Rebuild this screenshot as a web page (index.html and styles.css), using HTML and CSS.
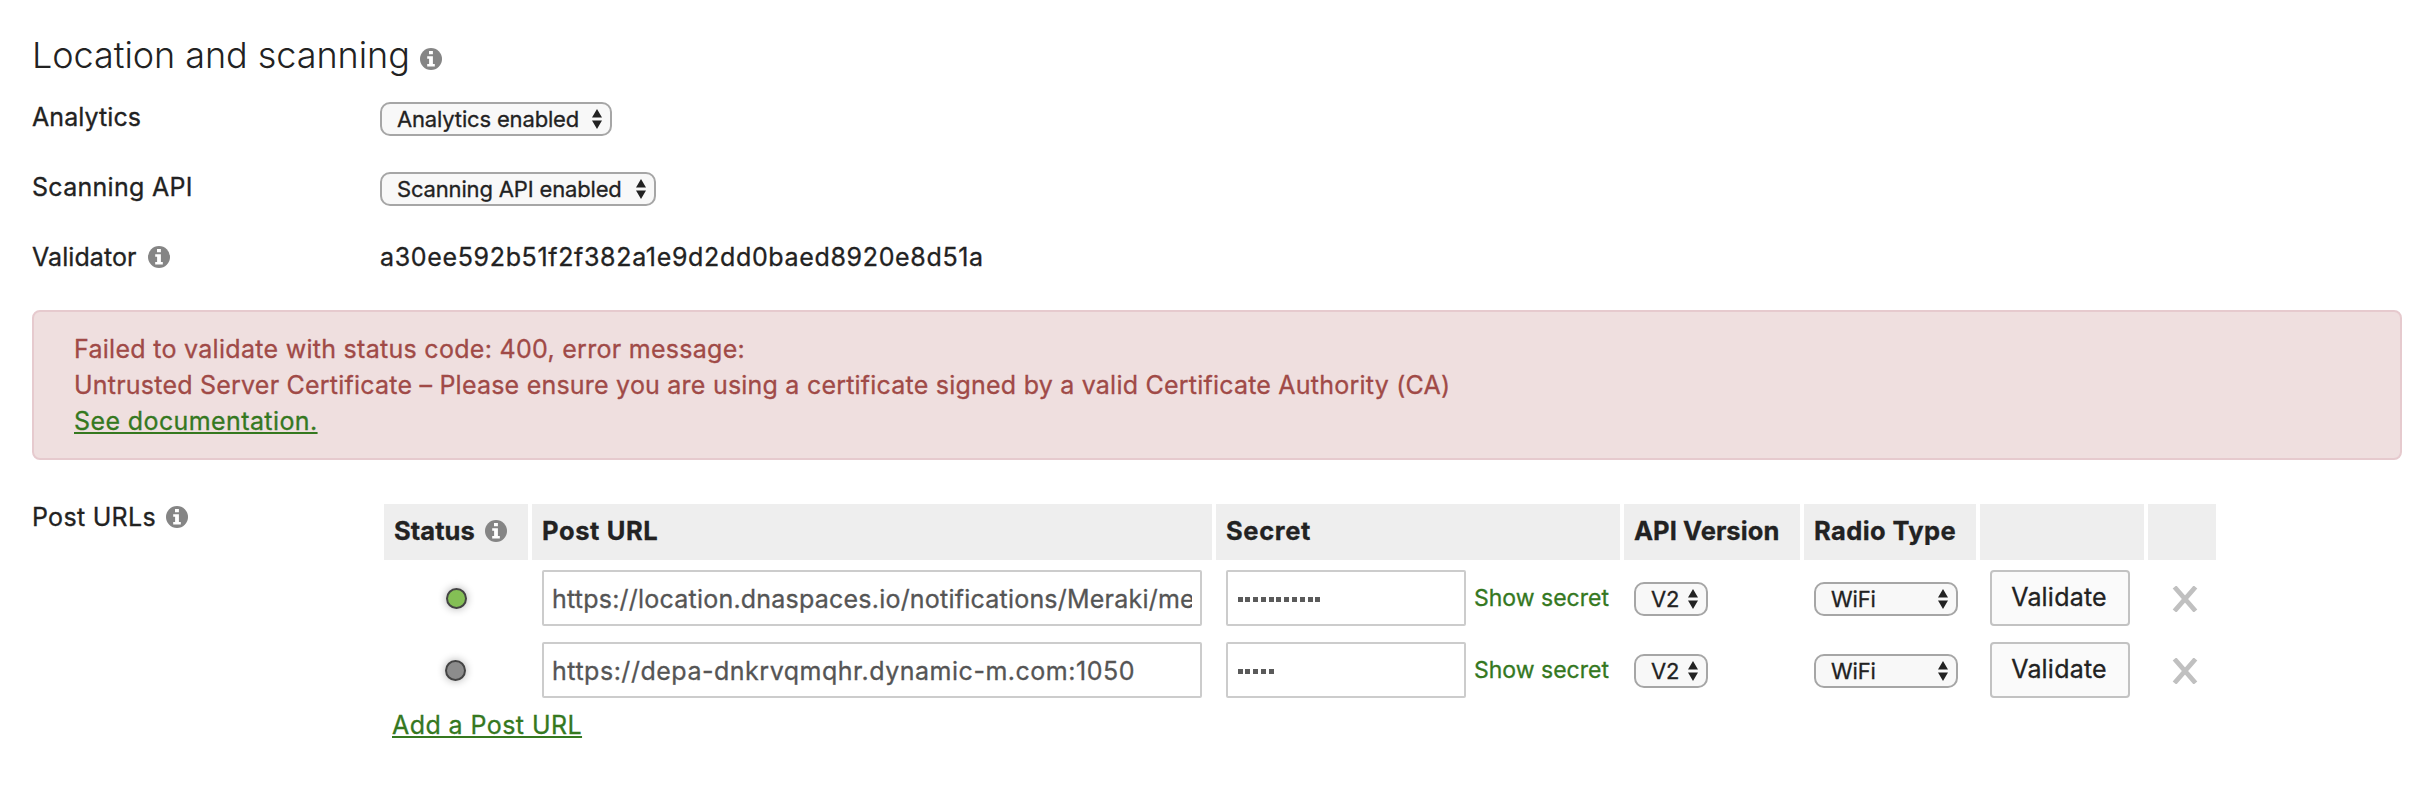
FILE: index.html
```html
<!DOCTYPE html>
<html lang="en">
<head>
<meta charset="utf-8">
<title>Location and scanning</title>
<link rel="stylesheet" href="styles.css">
</head>
<body>
<svg class="defs" width="0" height="0">
  <symbol id="info" viewBox="0 0 22 22"><circle cx="11" cy="11" r="11" fill="#858585"/><path fill="#fff" d="M9 2.9h3.9v3.3H9zM7.2 8.3h5.7v7.6h1.9v2.5H7.2v-2.5h1.9v-5.1H7.2z"/></symbol>
  <symbol id="arrows" viewBox="0 0 10 20"><path fill="#222" d="M5 0l5 8.4H0zM5 20l5-8.4H0z"/></symbol>
  <symbol id="remove" viewBox="0 0 26 26"><path fill="none" stroke="#c0c0c0" stroke-width="4.8" d="M2.5 1l21 24M23.5 1l-21 24"/></symbol>
</svg>
<main class="page">
  <h1 class="title">Location and scanning<svg class="info"><use href="#info"/></svg></h1>
  <div class="row">
    <div class="label ls-1">Analytics</div>
    <div class="select select-analytics">Analytics enabled<svg class="arrows"><use href="#arrows"/></svg></div>
  </div>
  <div class="row">
    <div class="label ls-3">Scanning API</div>
    <div class="select select-scanning">Scanning API enabled<svg class="arrows"><use href="#arrows"/></svg></div>
  </div>
  <div class="row">
    <div class="label ls-1">Validator<svg class="info"><use href="#info"/></svg></div>
    <div class="hash">a30ee592b51f2f382a1e9d2dd0baed8920e8d51a</div>
  </div>
  <div class="alert">
    <p class="ls-3">Failed to validate with status code: 400, error message:</p>
    <p class="ls-2">Untrusted Server Certificate – Please ensure you are using a certificate signed by a valid Certificate Authority (CA)</p>
    <p class="ls-4"><a class="link" href="#">See documentation.</a></p>
  </div>
  <section class="post">
    <div class="post-label ls-3">Post URLs<svg class="info"><use href="#info"/></svg></div>
    <div class="content">
      <div class="grid head">
        <div class="ls-1">Status<svg class="info"><use href="#info"/></svg></div>
        <div class="ls-6">Post URL</div>
        <div class="ls-6">Secret</div>
        <div class="ls-1">API Version</div>
        <div class="ls-4">Radio Type</div>
        <div></div>
        <div></div>
      </div>
      <div class="grid item">
        <div class="status"><i class="dot green"></i></div>
        <div><div class="field url ls-2">https://location.dnaspaces.io/notifications/Meraki/me</div></div>
        <div class="secret"><div class="field masked"><i></i><i></i><i></i><i></i><i></i><i></i><i></i><i></i><i></i><i></i><i></i></div><a class="show" href="#">Show secret</a></div>
        <div><div class="select version">V2<svg class="arrows"><use href="#arrows"/></svg></div></div>
        <div><div class="select radio">WiFi<svg class="arrows"><use href="#arrows"/></svg></div></div>
        <div><div class="button">Validate</div></div>
        <div class="last"><svg class="remove"><use href="#remove"/></svg></div>
      </div>
      <div class="grid item">
        <div class="status"><i class="dot gray"></i></div>
        <div><div class="field url ls-5">https://depa-dnkrvqmqhr.dynamic-m.com:1050</div></div>
        <div class="secret"><div class="field masked"><i></i><i></i><i></i><i></i><i></i></div><a class="show" href="#">Show secret</a></div>
        <div><div class="select version">V2<svg class="arrows"><use href="#arrows"/></svg></div></div>
        <div><div class="select radio">WiFi<svg class="arrows"><use href="#arrows"/></svg></div></div>
        <div><div class="button">Validate</div></div>
        <div class="last"><svg class="remove"><use href="#remove"/></svg></div>
      </div>
      <div class="add"><a class="link" href="#">Add a Post URL</a></div>
    </div>
  </section>
</main>
</body>
</html>
```
FILE: styles.css
```css
* { box-sizing: border-box; }
body {
  margin: 0;
  background: #fff;
  color: #222;
  font: 25px/36px Inter, "Liberation Sans", sans-serif;
  -webkit-text-stroke: .3px;
  white-space: nowrap;
}
p { margin: 0; }
svg { display: block; flex: none; }
.defs { position: absolute; }
.page { padding: 0 22px 0 32px; }

.ls-1 { letter-spacing: .08px; }
.ls-2 { letter-spacing: .22px; }
.ls-3 { letter-spacing: .29px; }
.ls-4 { letter-spacing: .4px; }
.ls-5 { letter-spacing: .52px; }
.ls-6 { letter-spacing: .62px; }

.info { width: 22px; height: 22px; margin-left: 11px; }
.post .info { margin-left: 10px; }
.arrows { width: 10px; height: 20px; margin-left: auto; }

.title {
  display: flex;
  align-items: center;
  height: 84px;
  margin: 0;
  padding-top: 26px;
  font-size: 36px;
  font-weight: 300;
  letter-spacing: -.05px;
  -webkit-text-stroke: 0;
}
.title .info { margin: 7px 0 0 10px; }

.row { display: flex; align-items: center; height: 70px; }
.label { display: flex; align-items: center; width: 348px; padding-bottom: 4px; }
.hash { padding-bottom: 4px; letter-spacing: .66px; }

.select {
  display: flex;
  align-items: center;
  height: 34px;
  padding: 0 8px 0 15px;
  border: 2px solid #a6a6a6;
  border-radius: 10px;
  background: #f8f8f8;
  font-size: 22px;
  line-height: 28px;
  letter-spacing: -.16px;
}
.select-analytics { width: 232px; }
.select-scanning { width: 276px; }

.alert {
  height: 150px;
  margin-top: 16px;
  padding: 19px 40px;
  border: 2px solid #e6cace;
  border-radius: 8px;
  background: #efdfdf;
  color: #a04a47;
}
.link {
  color: #35781f;
  text-decoration: underline;
  text-decoration-thickness: 2px;
  text-underline-offset: 2px;
  text-decoration-skip-ink: none;
}

.post { display: flex; margin-top: 39px; }
.post-label { display: flex; align-items: center; width: 352px; height: 36px; }
.content { padding-top: 5px; }
.grid {
  display: grid;
  grid-template-columns: 144px 680px 404px 176px 172px 164px 68px;
  column-gap: 4px;
}
.head { height: 56px; margin-bottom: 2px; font-size: 25.5px; font-weight: 700; }
.head > div {
  display: flex;
  align-items: center;
  padding: 0 0 2px 10px;
  background: #eee;
}
.item { height: 72px; }
.item > div { display: flex; align-items: center; padding-left: 10px; }
.item > .status { justify-content: center; padding-left: 0; }

.dot {
  width: 21px;
  height: 21px;
  border: 2px solid #444;
  border-radius: 50%;
  box-shadow: 0 0 8px rgba(0, 0, 0, .32);
}
.green { background: #84bf55; }
.gray { margin-right: 2px; background: #8c8c8c; }

.field {
  height: 56px;
  padding: 0 8px;
  border: 2px solid #ccc;
  border-radius: 2px;
  background: #fff;
  color: #555;
}
.url { width: 660px; line-height: 54px; overflow: clip; overflow-clip-margin: content-box; }
.masked { display: flex; align-items: center; gap: 2.8px; width: 240px; padding-left: 9.5px; padding-top: 2px; }
.masked i { width: 5px; height: 5px; background: #5a5a5a; }
.show { margin-left: 8px; color: #35781f; font-size: 23px; letter-spacing: 0; text-decoration: none; }

.version { width: 74px; }
.radio { width: 144px; }
.item .select { margin-top: 2px; padding-bottom: 1px; }
.button {
  width: 140px;
  height: 56px;
  padding-right: 2px;
  border: 2px solid #c2c2c2;
  border-radius: 4px;
  background: #fafafa;
  line-height: 50px;
  text-align: center;
  letter-spacing: .2px;
}
.item > .last { padding: 2px 0 0 24px; }
.remove { width: 26px; height: 26px; }
.add { height: 36px; margin-top: 1px; padding-left: 8px; letter-spacing: .43px; }
```
